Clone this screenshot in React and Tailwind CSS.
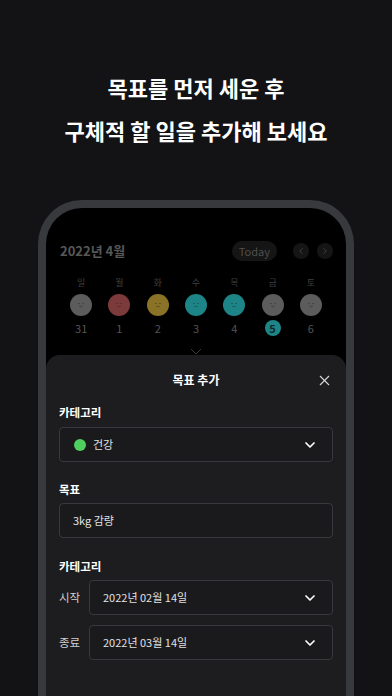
import { X, ChevronDown, ChevronLeft, ChevronRight } from 'lucide-react';

const days = [
  { w: '일', d: '31', c: 'bg-[#5c5c5c]' },
  { w: '월', d: '1', c: 'bg-[#7c3a3a]' },
  { w: '화', d: '2', c: 'bg-[#8a7326]' },
  { w: '수', d: '3', c: 'bg-[#1d8487]' },
  { w: '목', d: '4', c: 'bg-[#1d8487]' },
  { w: '금', d: '5', c: 'bg-[#5c5c5c]', today: true },
  { w: '토', d: '6', c: 'bg-[#5c5c5c]' },
];

const font = { fontFamily: '"Noto Sans CJK KR", "Noto Sans", sans-serif' };

const Face = () => (
  <svg width="10" height="6" viewBox="0 0 10 6" className="opacity-40">
    <path d="M2.5 1.5h1M6.5 1.5h1M3.5 4.5q1.5 .8 3 0" stroke="#222" strokeWidth="1" fill="none" strokeLinecap="round" />
  </svg>
);

const SelectBox = ({ children }) => (
  <div className="flex-1 h-[35px] rounded-[4px] border border-[#38383d] bg-[#1a1a1d] flex items-center pl-[13px] pr-[14px]">
    <div className="flex-1 flex items-center text-[11px] text-[#e2e2e4]">{children}</div>
    <ChevronDown size={16} strokeWidth={2.6} className="text-white" />
  </div>
);

export default function App() {
  return (
    <div className="w-[392px] h-[696px] overflow-hidden bg-[#131315] flex flex-col items-center" style={font}>
      <div className="pt-[66px] text-center text-white font-bold text-[22px] leading-[43px]">
        <p>목표를 먼저 세운 후</p>
        <p>구체적 할 일을 추가해 보세요</p>
      </div>

      <div className="mt-[48px] w-[316px] h-[520px] shrink-0 rounded-t-[44px] border-[8px] border-b-0 border-[#37393c] bg-black flex flex-col overflow-hidden">
        <div className="h-[147px] shrink-0 flex flex-col pt-[33px]">
          <div className="h-[20px] flex items-center pl-[14px] pr-[13px]">
            <span className="flex-1 text-[13px] font-bold text-[#575757]">2022년 4월</span>
            <span className="h-[20px] px-[7px] rounded-full bg-[#151515] text-[11px] text-[#4f4f4f] flex items-center">Today</span>
            <span className="ml-[16px] w-[16px] h-[16px] rounded-full bg-[#151515] flex items-center justify-center">
              <ChevronLeft size={10} className="text-[#4a4a4a]" />
            </span>
            <span className="ml-[8px] w-[16px] h-[16px] rounded-full bg-[#151515] flex items-center justify-center">
              <ChevronRight size={10} className="text-[#4a4a4a]" />
            </span>
          </div>
          <div className="px-[16px] mt-[15px] grid grid-cols-7">
            {days.map((x) => (
              <div key={x.w} className="flex flex-col items-center">
                <span className="h-[14px] leading-[14px] text-[9px] text-[#3f3f3f]">{x.w}</span>
                <span className={`mt-[4px] w-[22px] h-[22px] rounded-full ${x.c} flex items-center justify-center`}>
                  <Face />
                </span>
                <span className="mt-[4px] h-[16px] flex items-center justify-center">
                  {x.today ? (
                    <span className="w-[16px] h-[16px] rounded-full bg-[#1d8487] text-[11px] font-bold text-[#0d2c2d] flex items-center justify-center">{x.d}</span>
                  ) : (
                    <span className="text-[11px] text-[#555]">{x.d}</span>
                  )}
                </span>
              </div>
            ))}
          </div>
          <div className="mt-[12px] flex justify-center">
            <svg width="12" height="7" viewBox="0 0 12 7">
              <path d="M1 1l5 5 5-5" stroke="#3a3a3a" strokeWidth="1" fill="none" />
            </svg>
          </div>
        </div>

        <div className="flex-1 bg-[#1d1d20] rounded-t-[14px] px-[13px] pt-[13px]">
          <div className="h-[24px] flex items-center">
            <span className="w-[24px]" />
            <span className="flex-1 text-center text-[12px] font-bold text-white">목표 추가</span>
            <span className="w-[24px] flex justify-end">
              <X size={17} strokeWidth={1.5} className="text-[#d8d8d8]" />
            </span>
          </div>

          <p className="mt-[12px] h-[16px] leading-[16px] text-[11.5px] font-bold text-white">카테고리</p>
          <div className="mt-[7px] flex">
            <SelectBox>
              <span className="w-[12px] h-[12px] rounded-full bg-[#4fcf5e] ml-[1px] mr-[7px]" />
              건강
            </SelectBox>
          </div>

          <p className="mt-[19px] h-[16px] leading-[16px] text-[11.5px] font-bold text-white">목표</p>
          <div className="mt-[6px] h-[35px] rounded-[4px] border border-[#38383d] bg-[#1a1a1d] flex items-center pl-[13px] text-[11px] text-[#e2e2e4]">
            3kg 감량
          </div>

          <p className="mt-[20px] h-[16px] leading-[16px] text-[11.5px] font-bold text-white">카테고리</p>
          <div className="mt-[6px] flex items-center">
            <span className="w-[30px] text-[11.5px] text-[#d0d0d2]">시작</span>
            <SelectBox>2022년 02월 14일</SelectBox>
          </div>
          <div className="mt-[10px] flex items-center">
            <span className="w-[30px] text-[11.5px] text-[#d0d0d2]">종료</span>
            <SelectBox>2022년 03월 14일</SelectBox>
          </div>
        </div>
      </div>
    </div>
  );
}
